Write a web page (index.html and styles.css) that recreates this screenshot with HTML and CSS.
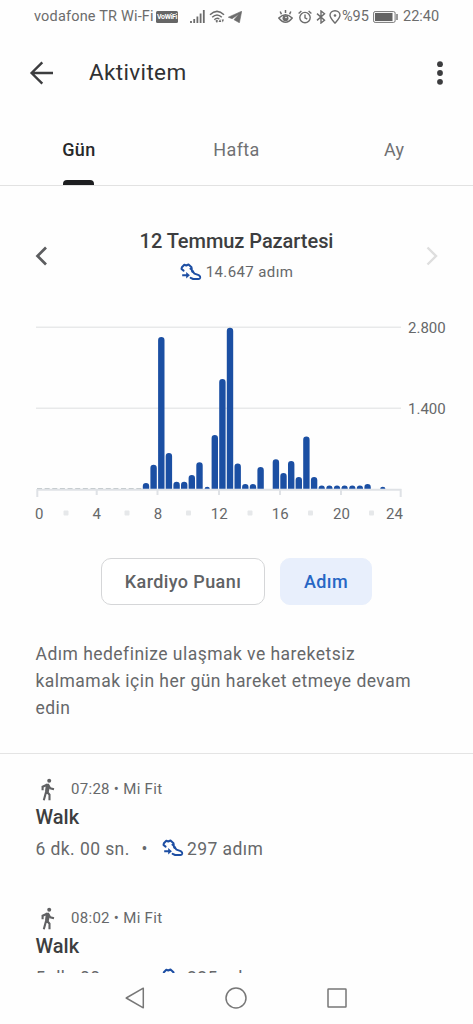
FILE: index.html
```
<!DOCTYPE html>
<html lang="tr">
<head>
<meta charset="utf-8">
<title>Aktivitem</title>
<link rel="stylesheet" href="styles.css">
</head>
<body>
<svg class="defs" width="0" height="0" aria-hidden="true">
  <symbol id="shoe" viewBox="0 0 22 18">
    <path d="M3.600 7.600L1.500 6 1.900 4.300 4.300 1.800 6.300 2.500 8.500 1.500 11.500 4.300 11.900 7.700 14.500 10.600 18.700 12.100Q20.600 13.200 20.200 14.700 19.800 16 18.500 16H13.200L10.600 14.800" fill="none" stroke="#1d4ea3" stroke-width="2" stroke-linejoin="round" stroke-linecap="round"/>
    <path d="M9.700 6.100L12 5.200M11.600 9.200L13.900 8.200M2.200 12.300H7.500" fill="none" stroke="#1d4ea3" stroke-width="1.900"/>
    <path d="M6.200 9L9.900 12.300 6.200 15.600Z" fill="#1d4ea3"/>
  </symbol>
  <symbol id="walk" viewBox="0 0 24 24">
    <circle cx="13.200" cy="3.800" r="2" fill="#606163"/>
    <path d="M11.500 7.700L10.100 14.800M11 7.800L6.600 9.700V13.300M12.300 8.200L14.300 11.300 18 12.200M10.300 14L7.800 23.300M10.800 14.500L13.500 17.700V23.300" fill="none" stroke="#606163" stroke-width="2.100"/>
    <path d="M9.800 6.700h3.200l.8 3-1.100 5.800-3.400-.7z" fill="#606163"/>
  </symbol>
</svg>
<div class="screen">
  <header class="status">
    <span class="carrier">vodafone TR Wi-Fi</span>
    <span class="vowifi">VoWiFi</span>
    <svg class="signal" width="15" height="13" viewBox="0 0 15 13"><path d="M1 11v2M4.200 9v4M7.400 6.500v6.500M10.600 3.500v9.500M13.800 0v13" stroke="#6c6c6c" stroke-width="1.800"/></svg>
    <svg class="wifi" width="16" height="14" viewBox="0 0 16 14"><g fill="none" stroke="#6c6c6c" stroke-width="1.500"><path d="M1 4.700Q8-2 15 4.700M3.200 7.300Q8 2.700 12.800 7.300M5.300 9.700Q8 7.300 10.300 9"/></g><path d="M6.300 10.800L8 9.700l1 1-1 2.300zM9.500 12l1.600-3 1.200 3zM12.600 9.500h2.400l-1.200 3z" fill="#6c6c6c"/></svg>
    <svg class="plane" width="14" height="12" viewBox="0 0 14 12"><path d="M13.700.2L.3 6.200l3.800 1.500L11 2.900 6 8.700l5.400 3.100z" fill="#6c6c6c" stroke="#6c6c6c" stroke-width=".6"/></svg>
    <span class="spacer"></span>
    <svg class="eye" width="15" height="14" viewBox="0 0 15 14"><g fill="none" stroke="#6c6c6c" stroke-width="1.500"><path d="M.8 8Q7.500 1.500 14.200 8 7.500 16.500.8 8zM7.500 0v3M2.200 1.500l1.200 2.700M12.800 1.500l-1.200 2.700"/></g><circle cx="7.500" cy="8.300" r="3" fill="#6c6c6c"/><circle cx="8" cy="7.500" r=".8" fill="#fff"/></svg>
    <svg class="alarm" width="14" height="14" viewBox="0 0 14 14"><g fill="none" stroke="#6c6c6c" stroke-width="1.400"><circle cx="7" cy="7.600" r="5.200"/><path d="M7 4.500v3.400l2.300 1.200M.6 3.400L3.400.9M13.400 3.400L10.600.9"/></g></svg>
    <svg class="bt" width="10" height="14" viewBox="0 0 10 14"><path d="M1 3.600l7.500 6.600L5 13V1l3.500 2.800L1 10.400" fill="none" stroke="#6c6c6c" stroke-width="1.400"/></svg>
    <svg class="pin" width="12" height="14" viewBox="0 0 12 14"><path d="M6 13.100C3 9.700 1 7.800 1 5.300a5 4.600 0 0 1 10 0C11 7.800 9 9.700 6 13.100z" fill="none" stroke="#6c6c6c" stroke-width="1.400"/><circle cx="6" cy="5.500" r="1.300" fill="#6c6c6c"/></svg>
    <span class="percent">%95</span>
    <svg class="battery" width="25" height="12" viewBox="0 0 25 12"><rect x=".6" y=".6" width="21.500" height="10.800" rx="1.500" fill="#fff" stroke="#777"/><rect x="2" y="2" width="17.500" height="8" fill="#636363"/><path d="M24 3v6" stroke="#777" stroke-width="1.500"/></svg>
    <span class="clock">22:40</span>
  </header>

  <div class="appbar">
    <svg class="back" width="24" height="24" viewBox="0 0 24 24"><path d="M24 12H2.500M13.300 1.300L2.600 12l10.700 10.700" fill="none" stroke="#3c3d3f" stroke-width="2.400"/></svg>
    <h1 class="title">Aktivitem</h1>
    <svg class="more" width="8" height="24" viewBox="0 0 8 24"><g fill="#3c3d3f"><circle cx="4" cy="3.200" r="2.900"/><circle cx="4" cy="12" r="2.900"/><circle cx="4" cy="20.800" r="2.900"/></g></svg>
  </div>

  <nav class="tabs">
    <div class="tab active"><span>Gün</span></div>
    <div class="tab"><span>Hafta</span></div>
    <div class="tab"><span>Ay</span></div>
  </nav>

  <section class="daynav">
    <svg class="chev" width="12" height="20" viewBox="0 0 12 20"><path d="M11 1.500L2.500 10l8.500 8.500" fill="none" stroke="#5c5d5f" stroke-width="2.700"/></svg>
    <div class="day">
      <h2 class="date">12 Temmuz Pazartesi</h2>
      <div class="total"><svg class="shoe" width="22" height="18"><use href="#shoe"/></svg><span>14.647 adım</span></div>
    </div>
    <svg class="chev" width="12" height="20" viewBox="0 0 12 20"><path d="M1.500 1.500L10 10l-8.500 8.500" fill="none" stroke="#dedede" stroke-width="2.400"/></svg>
  </section>

  <section class="chart">
    <svg width="473" height="215" viewBox="0 315 473 215">
      <path d="M36 327.300H401M36 408.200H401" stroke="#e8e9ea" stroke-width="1.500"/>
      <path d="M37 489.800H401.500M37.300 489v8M96.700 489v6M157.500 489v6M219 489v6M280 489v6M341 489v6M400.700 489v8" stroke="#dfe2e6" stroke-width="2" fill="none"/>
      <path d="M37 488.500H143" stroke="#c7cdd0" stroke-width="1.200" stroke-dasharray="5 2.640"/>
      <path class="bars" d="M142.800 488.800V486.200a3.200 3.200 0 0 1 6.400 0V488.800z
        M150.400 488.800V468a3.200 3.200 0 0 1 6.400 0V488.800z
        M158.100 488.800V340.200a3.200 3.200 0 0 1 6.400 0V488.800z
        M165.700 488.800V456.200a3.200 3.200 0 0 1 6.400 0V488.800z
        M173.400 488.800V485a3.200 3.200 0 0 1 6.400 0V488.800z
        M181 488.800V485a3.200 3.200 0 0 1 6.400 0V488.800z
        M188.600 488.800V478.200a3.200 3.200 0 0 1 6.400 0V488.800z
        M196.300 488.800V465.500a3.200 3.200 0 0 1 6.400 0V488.800z
        M204.600 488.800a2.600 2 0 0 1 5.200 0z
        M211.600 488.800V438.200a3.200 3.200 0 0 1 6.400 0V488.800z
        M219.200 488.800V382.200a3.200 3.200 0 0 1 6.400 0V488.800z
        M226.800 488.800V331a3.200 3.200 0 0 1 6.400 0V488.800z
        M234.500 488.800V466.700a3.200 3.200 0 0 1 6.400 0V488.800z
        M242.100 488.800V487.200a3.200 3.200 0 0 1 6.400 0V488.800z
        M249.800 488.800V487.200a3.200 3.200 0 0 1 6.400 0V488.800z
        M257.400 488.800V470.200a3.200 3.200 0 0 1 6.400 0V488.800z
        M272.700 488.800V462.500a3.200 3.200 0 0 1 6.400 0V488.800z
        M280.300 488.800V476.200a3.200 3.200 0 0 1 6.400 0V488.800z
        M288 488.800V464.300a3.200 3.200 0 0 1 6.400 0V488.800z
        M295.600 488.800V480.200a3.200 3.200 0 0 1 6.400 0V488.800z
        M303.200 488.800V439.800a3.200 3.200 0 0 1 6.400 0V488.800z
        M310.900 488.800V480.200a3.200 3.200 0 0 1 6.400 0V488.800z
        M318.500 488.800a3.200 3.400 0 0 1 6.400 0z
        M326.200 488.800a3.200 3.400 0 0 1 6.400 0z
        M333.800 488.800a3.200 3.400 0 0 1 6.400 0z
        M341.400 488.800a3.200 3.400 0 0 1 6.400 0z
        M349.100 488.800a3.200 3.400 0 0 1 6.400 0z
        M356.700 488.800a3.200 3.400 0 0 1 6.400 0z
        M364.400 488.800V487.200a3.200 3.200 0 0 1 6.400 0V488.800z
        M380.200 488.800a2.600 2 0 0 1 5.200 0z"/>
      <g fill="#e6e8ea"><rect x="63.500" y="510.500" width="5" height="5" rx="1"/><rect x="124.500" y="510.500" width="5" height="5" rx="1"/><rect x="186" y="510.500" width="5" height="5" rx="1"/><rect x="247.500" y="510.500" width="5" height="5" rx="1"/><rect x="308" y="510.500" width="5" height="5" rx="1"/><rect x="369" y="510.500" width="5" height="5" rx="1"/></g>
      <g class="hours"><text x="39.300" y="518.500">0</text><text x="96.800" y="518.500">4</text><text x="158" y="518.500">8</text><text x="219.300" y="518.500">12</text><text x="280.300" y="518.500">16</text><text x="341.500" y="518.500">20</text><text x="394.500" y="518.500">24</text></g>
      <g class="scale"><text x="408" y="332.500">2.800</text><text x="408" y="413.500">1.400</text></g>
    </svg>
  </section>

  <div class="chips">
    <button class="chip">Kardiyo Puanı</button>
    <button class="chip selected">Adım</button>
  </div>
  <p class="advice">Adım hedefinize ulaşmak ve hareketsiz<br>kalmamak için her gün hareket etmeye devam<br>edin</p>

  <main class="list">
    <article class="entry">
      <div class="meta"><svg class="walk" width="24" height="24"><use href="#walk"/></svg><span>07:28 • Mi Fit</span></div>
      <h3 class="name">Walk</h3>
      <div class="stats"><span class="dur">6 dk. 00 sn.</span><span class="dot">•</span><svg class="shoe" width="22" height="18"><use href="#shoe"/></svg><span>297 adım</span></div>
    </article>
    <article class="entry">
      <div class="meta"><svg class="walk" width="24" height="24"><use href="#walk"/></svg><span>08:02 • Mi Fit</span></div>
      <h3 class="name">Walk</h3>
      <div class="stats"><span class="dur">5 dk. 00 sn.</span><span class="dot">•</span><svg class="shoe" width="22" height="18"><use href="#shoe"/></svg><span>225 adım</span></div>
    </article>
  </main>

  <footer class="sysnav">
    <svg width="22" height="24" viewBox="0 0 22 24"><path d="M19.300 2.200V21.800L2.200 12z" fill="none" stroke="#777" stroke-width="1.500" stroke-linejoin="round"/></svg>
    <svg width="24" height="24" viewBox="0 0 24 24"><circle cx="12" cy="12" r="10" fill="none" stroke="#777" stroke-width="1.500"/></svg>
    <svg width="22" height="24" viewBox="0 0 22 24"><rect x="2" y="3" width="18" height="18" rx=".5" fill="none" stroke="#777" stroke-width="1.500"/></svg>
  </footer>
</div>
</body>
</html>
```
FILE: styles.css
```
* { box-sizing: border-box; }
body { margin: 0; background: #fefefe; font-family: Roboto, "Noto Sans", sans-serif; color: #66686a; }
h1, h2, h3, p { margin: 0; font-weight: 400; }
svg { display: block; flex: none; }
.defs { position: absolute; }
.screen { width: 473px; height: 1024px; overflow: hidden; display: flex; flex-direction: column; }
.screen > * { flex: none; }

.status { height: 33px; padding: 0 34px; display: flex; align-items: center; font-size: 14.5px; color: #6c6c6c; white-space: nowrap; }
.carrier { width: 122px; letter-spacing: .18px; }
.vowifi { width: 22px; height: 12px; border-radius: 1.5px; background: #666; color: #fff; font-size: 7px; font-weight: 700; line-height: 12px; text-align: center; letter-spacing: -.3px; }
.signal { margin-left: 12px; }
.wifi { margin-left: 4px; }
.plane { margin-left: 3px; }
.spacer { flex: 1; }
.alarm { margin-left: 5px; }
.bt { margin-left: 4px; }
.pin { margin-left: 3px; margin-right: 1px; }
.percent { width: 31px; }
.battery { width: 25px; }
.clock { width: 36px; margin-left: 5px; }

.appbar { height: 79px; display: flex; align-items: center; padding: 0 29px; }
.title { margin-left: 36px; margin-top: -1px; flex: 1; font-size: 22.5px; letter-spacing: .35px; color: #303133; }

.tabs { height: 74px; display: grid; grid-template-columns: 1fr 1fr 1fr; border-bottom: 1px solid #e2e2e2; }
.tab { display: flex; align-items: flex-start; justify-content: center; padding-top: 27px; font-size: 18px; line-height: 22px; letter-spacing: .35px; font-weight: 450; color: #707173; }
.tab.active { color: #27282a; font-weight: 500; flex-direction: column; align-items: center; justify-content: space-between; }
.tab.active::after { content: ""; width: 31px; height: 5px; background: #1d1e20; border-radius: 4px 4px 0 0; }

.daynav { height: 129px; padding: 43px 35px 0; display: flex; align-items: flex-start; justify-content: space-between; }
.chev { margin-top: 17px; }
.day { display: flex; flex-direction: column; align-items: center; }
.date { font-size: 20px; line-height: 24px; font-weight: 480; letter-spacing: -.05px; color: #3d3e40; white-space: nowrap; }
.total { margin-top: 9px; height: 20px; display: flex; align-items: center; gap: 4px; font-size: 15px; letter-spacing: .4px; }

.chart { height: 215px; }
.bars { fill: #1b4fa3; }
.hours text { font-size: 15px; fill: #66686a; text-anchor: middle; }
.scale text { font-size: 15px; fill: #66686a; }

.chips { margin-top: 28px; padding-left: 101px; display: flex; gap: 15px; }
.chip { width: 164px; height: 47px; padding: 0; border: 1px solid #d5d6d8; border-radius: 10px; background: #fff; color: #606264; font: 500 18px Roboto, sans-serif; letter-spacing: .4px; }
.chip.selected { width: 92px; background: #e8effc; border-color: #e8effc; color: #2766c4; }

.advice { margin-top: 36px; padding-left: 35.500px; height: 112px; font-size: 17.500px; line-height: 27px; letter-spacing: .47px; white-space: nowrap; }

.list { height: 220px; overflow: hidden; border-top: 1px solid #e4e4e4; padding: 22px 35.500px 0; }
.entry { height: 128.500px; }
.meta { height: 26px; display: flex; align-items: center; font-size: 15px; letter-spacing: .3px; }
.meta span { margin-left: 11.500px; }
.name { margin-top: 3px; font-size: 20px; line-height: 24px; font-weight: 500; color: #3d3e40; }
.stats { margin-top: 8.500px; height: 23px; display: flex; align-items: center; font-size: 17.500px; letter-spacing: .42px; white-space: nowrap; }
.dur { width: 106px; }
.dot { width: 20px; }
.stats .shoe { margin-right: 3.500px; margin-top: -2px; }

.sysnav { height: 51px; display: flex; align-items: center; gap: 78px; padding: 0 0 1px 124px; }
```
